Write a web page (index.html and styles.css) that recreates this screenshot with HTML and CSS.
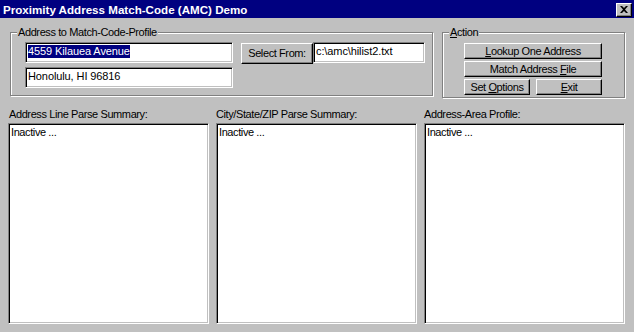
FILE: index.html
```html
<!DOCTYPE html>
<html lang="en">
<head>
    <meta charset="UTF-8">
    <title>Proximity Address Match-Code (AMC) Demo</title>
    <link rel="stylesheet" href="styles.css">
</head>
<body>

<div class="window">
    <div class="titlebar">
        <span class="title">Proximity Address Match-Code (AMC) Demo</span>
        <button class="close" type="button" aria-label="Close">
            <svg width="8" height="7" viewBox="0 0 8 7"><path d="M0 0h2l2 2 2-2h2L5 3.5 8 7H6L4 5 2 7H0l3-3.5z" fill="#000"/></svg>
        </button>
    </div>

    <div class="top">
        <div class="group address-group">
            <span class="group-title">Address to Match-Code-Profile</span>
            <div class="address-cols">
                <div class="fields">
                    <div class="field"><span class="sel">4559 Kilauea Avenue</span></div>
                    <div class="field">Honolulu, HI 96816</div>
                </div>
                <button class="btn select-btn" type="button">Select From:</button>
                <div class="field path">c:\amc\hilist2.txt</div>
            </div>
        </div>

        <div class="group action-group">
            <span class="group-title"><u>A</u>ction</span>
            <div class="actions">
                <button class="btn wide" type="button"><u>L</u>ookup One Address</button>
                <button class="btn wide" type="button">Match Address <u>F</u>ile</button>
                <div class="action-row">
                    <button class="btn half" type="button">Set <u>O</u>ptions</button>
                    <button class="btn half" type="button"><u>E</u>xit</button>
                </div>
            </div>
        </div>
    </div>

    <div class="panels">
        <div class="panel">
            <div class="panel-label">Address Line Parse Summary:</div>
            <div class="memo">Inactive ...</div>
        </div>
        <div class="panel">
            <div class="panel-label">City/State/ZIP Parse Summary:</div>
            <div class="memo">Inactive ...</div>
        </div>
        <div class="panel">
            <div class="panel-label">Address-Area Profile:</div>
            <div class="memo">Inactive ...</div>
        </div>
    </div>
</div>

</body>
</html>
```

FILE: styles.css
```css
body {
    margin: 0;
    background: #c0c0c0;
}
.window {
    width: 634px;
    height: 332px;
    background: #c0c0c0;
    font-family: "Liberation Sans", Arial, sans-serif;
    font-size: 11px;
    line-height: 13px;
    letter-spacing: -0.4px;
    color: #000;
    overflow: hidden;
}
.titlebar {
    height: 18px;
    background: #000080;
    color: #fff;
    display: flex;
    align-items: center;
    justify-content: space-between;
    padding: 0 2px 0 3px;
}
.title {
    font-weight: bold;
    font-size: 11.6px;
    letter-spacing: 0;
}
.close {
    width: 16px;
    height: 14px;
    padding: 0;
    margin-top: 1px;
    background: #c0c0c0;
    border: 1px solid;
    border-color: #fff #000 #000 #fff;
    box-shadow: inset -1px -1px 0 #808080;
    display: flex;
    align-items: center;
    justify-content: center;
}

/* group boxes */
.top {
    display: flex;
    align-items: flex-start;
    gap: 9px;
    margin-top: 14px;
    padding-left: 10px;
}
.group {
    position: relative;
    box-sizing: border-box;
    border: 1px solid #808080;
    box-shadow: 1px 1px 0 #fff, inset 1px 1px 0 #fff;
}
.group-title {
    position: absolute;
    top: -7px;
    left: 6px;
    padding: 0 1px;
    background: #c0c0c0;
}
.address-group {
    width: 423px;
    height: 64px;
    padding: 9px 0 0 14px;
}
.action-group {
    width: 183px;
    height: 66px;
    padding: 10px 0 0 21px;
}

/* fields and buttons */
.address-cols {
    display: flex;
    align-items: flex-start;
}
.fields {
    display: flex;
    flex-direction: column;
    gap: 4px;
    margin-right: 8px;
}
.field {
    box-sizing: border-box;
    width: 208px;
    height: 21px;
    padding: 2px;
    background: #fff;
    border: 1px solid;
    border-color: #808080 #fff #fff #808080;
    box-shadow: inset 1px 1px 0 #000, inset -1px -1px 0 #c0c0c0;
    white-space: nowrap;
    overflow: hidden;
    letter-spacing: -0.1px;
}
.sel {
    background: #000080;
    color: #fff;
    display: inline-block;
}
.field.path {
    width: 112px;
}
.btn {
    box-sizing: border-box;
    font: inherit;
    letter-spacing: inherit;
    color: #000;
    background: #c0c0c0;
    border: 1px solid;
    border-color: #fff #000 #000 #fff;
    box-shadow: inset -1px -1px 0 #808080;
    padding: 0;
    text-align: center;
}
.select-btn {
    width: 72px;
    height: 21px;
    margin-top: 1px;
}
.actions {
    display: flex;
    flex-direction: column;
    gap: 2px;
}
.wide {
    width: 138px;
    height: 16px;
}
.action-row {
    display: flex;
    gap: 6px;
}
.half {
    width: 66px;
    height: 16px;
}

/* parse panels */
.panels {
    display: grid;
    grid-template-columns: 201px 201px 201px;
    column-gap: 7px;
    margin-top: 10px;
    padding-left: 8px;
}
.panel-label {
    margin-bottom: 2px;
}
.panel:first-child .panel-label {
    padding-left: 1px;
}
.memo {
    box-sizing: border-box;
    height: 201px;
    padding: 2px 2px 1px;
    background: #fff;
    border: 1px solid;
    border-color: #808080 #fff #fff #808080;
    box-shadow: inset 1px 1px 0 #000, inset -1px -1px 0 #c0c0c0;
}
```
